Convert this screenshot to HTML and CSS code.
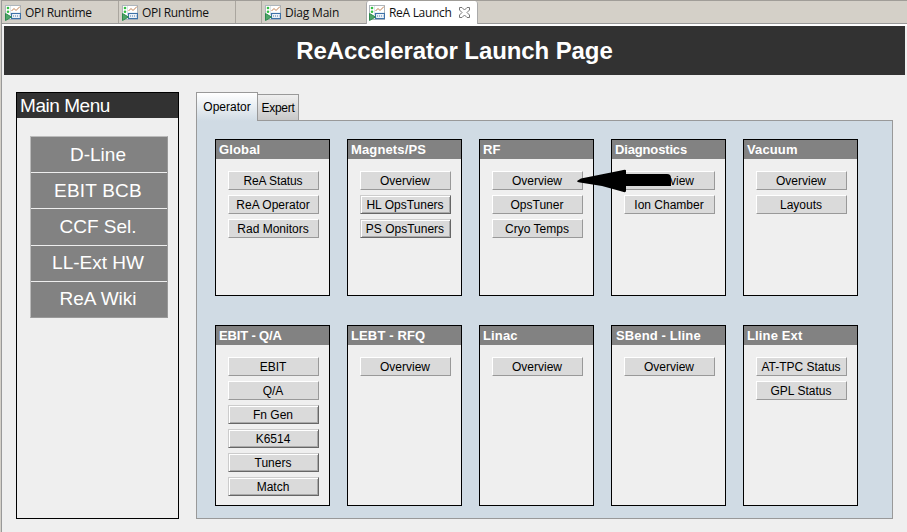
FILE: index.html
```
<!DOCTYPE html>
<html lang="en">
<head>
<meta charset="utf-8">
<title>ReA Launch</title>
<link rel="stylesheet" href="styles.css">
</head>
<body>
<svg class="defs" width="0" height="0">
  <symbol id="opi" viewBox="0 0 16 16">
    <rect x=".5" y=".5" width="15" height="14" fill="#fff" stroke="#aeb6bc"/>
    <path d="M5.5 1v9" stroke="#dce5ea"/>
    <circle cx="3" cy="3" r="1.3" fill="#35c044"/><circle cx="3" cy="6.7" r="1.3" fill="#35c044"/>
    <path d="M6.500 6L9 3.500l2 2 4-4" fill="none" stroke="#c08050" stroke-width="1"/>
    <rect x="6.500" y="8.500" width="9" height="5" fill="#fff" stroke="#3d72a8" stroke-width="1.2"/>
    <path d="M8 11h6.500" stroke="#3d72a8" stroke-width="1.2" stroke-dasharray="1.200 .8"/>
    <path d="M.5 8.500v7L6.500 12z" fill="#4fa56a" stroke="#2f8a4e"/>
  </symbol>
</svg>
<div class="window">
  <nav class="editor-tabs">
    <div class="editor-tab first"><svg class="icon"><use href="#opi"/></svg><span class="runtime">OPI Runtime</span></div>
    <div class="editor-tab second"><svg class="icon"><use href="#opi"/></svg><span class="runtime">OPI Runtime</span></div>
    <div class="editor-tab spacer"></div>
    <div class="editor-tab diag"><svg class="icon"><use href="#opi"/></svg><span class="diag-label">Diag Main</span></div>
    <div class="editor-tab active"><svg class="icon"><use href="#opi"/></svg><span class="launch-label">ReA Launch</span>
      <svg class="close" viewBox="0 0 11 11"><path d="M.5 .5h2.500l2.500 2.500L8 .5h2.500V3L8 5.500 10.500 8v2.500H8L5.500 8 3 10.500H.5V8L3 5.500.5 3z" fill="#fff" stroke="#777"/></svg>
    </div>
  </nav>
  <div class="page">
    <h1 class="banner">ReAccelerator Launch Page</h1>
    <main class="content">
      <aside class="menu">
        <h2 class="menu-title">Main Menu</h2>
        <div class="menu-items">
          <div class="menu-item">D-Line</div>
          <div class="menu-item wide">EBIT BCB</div>
          <div class="menu-item">CCF Sel.</div>
          <div class="menu-item">LL-Ext HW</div>
          <div class="menu-item">ReA Wiki</div>
        </div>
      </aside>
      <section class="workspace">
        <div class="tabs"><div class="tab current">Operator</div><div class="tab"><span class="expert">Expert</span></div></div>
        <div class="panel">
          <div class="card"><h3>Global</h3><div class="list"><div class="btn snug">ReA Status</div><div class="btn">ReA Operator</div><div class="btn">Rad Monitors</div></div></div>
          <div class="card"><h3>Magnets/PS</h3><div class="list"><div class="btn">Overview</div><div class="btn raised">HL OpsTuners</div><div class="btn raised">PS OpsTuners</div></div></div>
          <div class="card"><h3>RF</h3><div class="list"><div class="btn">Overview</div><div class="btn">OpsTuner</div><div class="btn">Cryo Temps</div></div>
            <svg class="arrow" viewBox="0 0 95 24"><path d="M0 12L4 9.500 44 1.500Q49 0 49 1.500V5H90Q94 5 94 9v8H49v5Q49 24 45 22.500L25 17 3 13.500Q0 13 0 12z"/></svg>
          </div>
          <div class="card"><h3 class="narrow">Diagnostics</h3><div class="list"><div class="btn">Overview</div><div class="btn">Ion Chamber</div></div></div>
          <div class="card"><h3>Vacuum</h3><div class="list"><div class="btn">Overview</div><div class="btn">Layouts</div></div></div>
          <div class="card"><h3 class="narrow">EBIT - Q/A</h3><div class="list"><div class="btn">EBIT</div><div class="btn">Q/A</div><div class="btn raised">Fn Gen</div><div class="btn raised">K6514</div><div class="btn raised">Tuners</div><div class="btn raised">Match</div></div></div>
          <div class="card"><h3>LEBT - RFQ</h3><div class="list"><div class="btn">Overview</div></div></div>
          <div class="card"><h3>Linac</h3><div class="list"><div class="btn">Overview</div></div></div>
          <div class="card"><h3 class="bend">SBend - Lline</h3><div class="list"><div class="btn">Overview</div></div></div>
          <div class="card"><h3>Lline Ext</h3><div class="list"><div class="btn">AT-TPC Status</div><div class="btn">GPL Status</div></div></div>
        </div>
      </section>
    </main>
  </div>
</div>
</body>
</html>
```
FILE: styles.css
```
* { box-sizing: border-box; }
body { margin: 0; background: #d4d0c8; font-family: "Liberation Sans", Arial, sans-serif; overflow: hidden; }
h1, h2, h3 { margin: 0; }
.defs { display: block; }
.window { height: 532px; margin-left: 1px; border-left: 1px solid #999; display: flex; flex-direction: column; }
.editor-tabs { height: 24px; flex: none; display: flex; background: #d4d0c8; border-top: 1px solid #a09d98; border-bottom: 1px solid #999; }
.editor-tab { display: flex; align-items: center; gap: 4px; padding: 1px 0 0 3px; border-right: 1px solid #aaa69f; font: 12px "Open Sans", "Noto Sans", sans-serif; color: #111; white-space: nowrap; }
.first, .second { width: 117px; }
.spacer { width: 26px; }
.diag { width: 104px; border-right: 0; }
.active { width: 112px; padding: 0 0 0 2px; margin-bottom: -1px; background: #fff; border: 1px solid #aaa; border-width: 0 1px; border-radius: 3px 3px 0 0; }
.icon { width: 16px; height: 16px; flex: none; }
.close { width: 11px; height: 11px; margin-left: 3px; flex: none; }
.runtime { letter-spacing: -.32px; }
.diag-label { letter-spacing: -.2px; }
.launch-label { letter-spacing: -.3px; }
.page { flex: 1; padding: 0 2px; background: #efefef; border-top: 2px solid #fff; }
.banner { height: 49px; background: #323232; color: #fff; font-size: 24px; line-height: 50px; letter-spacing: -.1px; text-align: center; }
.content { display: flex; align-items: flex-start; gap: 17px; padding: 17px 0 0 12px; }
.menu { width: 163px; height: 427px; border: 1px solid #000; }
.menu-title { height: 25px; background: #323232; color: #fff; font-size: 19px; line-height: 25px; font-weight: 400; padding-left: 3px; letter-spacing: -.45px; }
.menu-items { margin: 18px 10px 0 13px; border: 1px solid #a0a0a0; border-color: #bbb #999 #999 #bbb; height: 182px; display: flex; flex-direction: column; }
.menu-item { flex: 1; display: flex; align-items: center; justify-content: center; padding-right: 2px; background: #828282; color: #fff; font-size: 19px; border-top: 1px solid #eee; }
.menu-item:first-child { border-top: 0; }
.wide { letter-spacing: .2px; }
.workspace { width: 697px; }
.tabs { height: 28px; display: flex; align-items: flex-end; font-size: 12px; }
.tab { width: 41px; height: 26px; display: flex; align-items: center; justify-content: center; border: 1px solid #999; border-width: 1px 1px 0 0; background: linear-gradient(#efefef, #c8c8c8); }
.expert { letter-spacing: -.3px; }
.current { width: 62px; height: 29px; margin-bottom: -1px; border-left-width: 1px; background: linear-gradient(#fff, #d0dbe4); position: relative; }
.panel { height: 399px; border: 1px solid #999; background: #d0dbe4; padding: 18px; display: grid; grid-template-columns: repeat(5, 115px); grid-template-rows: 157px 181px; column-gap: 17px; row-gap: 29px; }
.card { position: relative; background: #efefef; border: 1px solid #000; }
.card h3 { height: 19px; background: #828282; color: #fff; font-size: 13px; line-height: 20px; padding-left: 3px; letter-spacing: .13px; white-space: nowrap; }
.card h3.narrow { letter-spacing: -.15px; }
.card h3.bend { padding-left: 4px; }
.list { padding: 12px 10px 0 12px; display: grid; gap: 5px; }
.btn { height: 19px; background: #dadada; border: 1px solid #999; border-color: #fff #999 #999 #fff; padding-right: 1px; font-size: 12px; line-height: 18px; text-align: center; white-space: nowrap; }
.snug { letter-spacing: -.1px; }
.raised { border-color: #ccc #666 #666 #ccc; box-shadow: inset 1px 1px #fff, inset -1px -1px #aaa; }
.arrow { position: absolute; z-index: 2; left: 97px; top: 29px; width: 95px; height: 24px; }
```
